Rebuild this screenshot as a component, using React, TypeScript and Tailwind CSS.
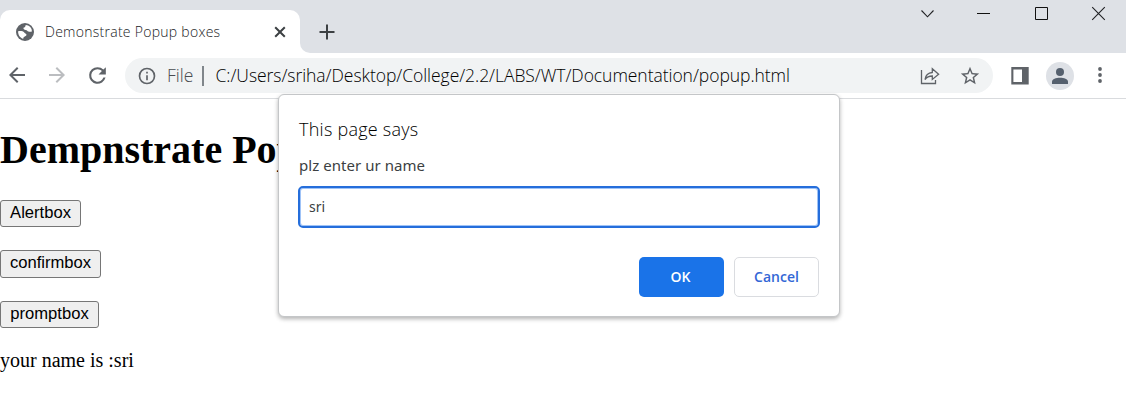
import React from "react";

const ui = "font-['Open_Sans','Noto_Sans',sans-serif]";
const uiBody = "font-['Noto_Sans','Open_Sans',sans-serif]";

function PageButton({ label, className }: { label: string; className: string }) {
  return (
    <button
      className={`flex items-center justify-center rounded-[3px] border border-[#767676] bg-[#efefef] font-['Liberation_Sans',Arial,sans-serif] text-[16.6px] leading-none text-black ${className}`}
    >
      <span className="-mt-px">{label}</span>
    </button>
  );
}

function TabStrip() {
  return (
    <div className="flex h-[53px] bg-[#dee1e6]">
      <div className="mt-[10px] flex h-[43px] w-[300px] items-center rounded-t-[10px] bg-white pl-4">
        <svg viewBox="0 0 18 18" className="size-[18px] shrink-0">
          <circle cx="9" cy="9" r="9" fill="#5f6368" />
          <path
            d="M9.6 2C9.8 3.6 8.8 4.4 7.4 4.8C7.4 6.2 8.2 6.9 9.6 7C11.2 7.1 11.4 8.2 12.4 8.6C13.8 9 15 8.8 15.9 8.4C16 5.6 14.6 3.6 12.6 2.7C11.6 2.2 10.6 2 9.6 2ZM2.1 8.2C3.6 8 5.2 8 6.6 8.3C8 8.6 8.2 10 9.4 10.4C10.6 10.8 10.8 12 10 12.8C9 13.6 7.6 13.4 7.2 15.7C4.2 15 2 12.2 2.1 8.2Z"
            fill="#fff"
          />
        </svg>
        <span className={`ml-[11px] w-[200px] shrink-0 whitespace-nowrap text-[14px] font-light tracking-[0.27px] text-[#202124] ${ui}`}>
          Demonstrate Popup boxes
        </span>
        <svg viewBox="0 0 12 12" className="ml-[29px] size-3 shrink-0" fill="none" stroke="#3c4043" strokeWidth="2">
          <path d="M1.2 1.2 10.8 10.8M10.8 1.2 1.2 10.8" />
        </svg>
      </div>
      <div className="h-[53px] w-[10px] bg-white">
        <div className="h-[53px] rounded-bl-[10px] bg-[#dee1e6]" />
      </div>
      <svg viewBox="0 0 16 16" className="ml-[9px] mt-[24px] size-4" fill="none" stroke="#3c4043" strokeWidth="2">
        <path d="M8 .5V15.5M.5 8H15.5" />
      </svg>
      <div className="ml-auto flex gap-[42px] pr-[20px] pt-[6px]">
        <svg viewBox="0 0 15 15" className="size-[15px]" fill="none" stroke="#202124" strokeWidth="1.1">
          <path d="M1.5 4.5 7.5 10.8 13.5 4.5" />
        </svg>
        <svg viewBox="0 0 15 15" className="size-[15px]" fill="none" stroke="#111" strokeWidth="1">
          <path d="M0 7.5H13" />
        </svg>
        <svg viewBox="0 0 15 15" className="size-[15px]" fill="none" stroke="#111" strokeWidth="1">
          <path d="M1.5 1.5H13.5V13.5H1.5Z" />
        </svg>
        <svg viewBox="0 0 15 15" className="size-[15px]" fill="none" stroke="#202124" strokeWidth="1.1">
          <path d="M1.2 1.2 13.8 13.8M13.8 1.2 1.2 13.8" />
        </svg>
      </div>
    </div>
  );
}

function Toolbar() {
  return (
    <div className="flex h-[46px] items-center border-b border-[#d9dbde] bg-white pl-[5px]">
      <svg viewBox="0 0 24 24" className="-mt-px size-6" fill="#5f6368">
        <path d="M20 11H7.83l5.59-5.59L12 4l-8 8 8 8 1.41-1.41L7.83 13H20z" />
      </svg>
      <svg viewBox="0 0 24 24" className="-mt-px ml-4 size-6" fill="#bbbdc0">
        <path d="M4 11H16.17l-5.59-5.59L12 4l8 8-8 8-1.41-1.41L16.17 13H4z" />
      </svg>
      <svg viewBox="0 0 24 24" className="-mt-px ml-4 size-[25px]" fill="#5f6368">
        <path d="M17.65 6.35A7.96 7.96 0 0 0 12 4a8 8 0 1 0 7.73 10h-2.08A6 6 0 1 1 12 6c1.66 0 3.14.69 4.22 1.78L13 11h7V4z" />
      </svg>
      <div className={`ml-[15px] flex h-[35px] w-[868px] items-center rounded-full bg-[#f1f3f4] pl-[12px] text-[17.5px] font-light ${ui}`}>
        <svg viewBox="0 0 24 24" className="size-5 shrink-0" fill="#5f6368">
          <path d="M11 17h2v-6h-2zm1-15a10 10 0 1 0 0 20 10 10 0 0 0 0-20m0 18a8 8 0 1 1 0-16 8 8 0 0 1 0 16M11 9h2V7h-2z" />
        </svg>
        <span className="ml-[10px] w-[35px] shrink-0 text-[#484c50]">File</span>
        <span className="h-[20px] w-[1.5px] shrink-0 bg-[#80868b]" />
        <span className="ml-[12px] w-[650px] shrink-0 whitespace-nowrap tracking-[-0.05px] text-black">
          C:/Users/sriha/Desktop/College/2.2/LABS/WT/Documentation/popup.html
        </span>
        <svg viewBox="0 0 20 20" className="ml-auto mr-[-1px] size-5 shrink-0" fill="none" stroke="#5f6368" strokeWidth="1.3">
          <path d="M1.5 4V17.5H15.5V14" />
          <path d="M5 13.5C5.6 9.3 8 6.8 12.3 6.5V2.8L18.6 8.3 12.3 13.4V10C9 10 6.8 11 5 13.5Z" />
        </svg>
        <svg viewBox="0 0 24 24" className="ml-5 mr-3 size-[22px] shrink-0" fill="#5f6368">
          <path d="m22 9.24-7.19-.62L12 2 9.19 8.63 2 9.24l5.46 4.73L5.82 21 12 17.27 18.18 21l-1.63-7.03zM12 15.4l-3.76 2.27 1-4.28-3.32-2.88 4.38-.38L12 6.1l1.71 4.04 4.38.38-3.32 2.88 1 4.28z" />
        </svg>
      </div>
      <svg viewBox="0 0 18 18" className="ml-[18px] size-[18px] shrink-0">
        <path d="M.3 0H17.7V17.5H.3ZM2.4 2.6V15H11V2.6Z" fill="#5f6368" fillRule="evenodd" />
      </svg>
      <div className="ml-[17px] flex size-7 shrink-0 items-center justify-center rounded-full bg-[#dee1e6]">
        <svg viewBox="0 0 16 16" className="size-4" fill="#55606e">
          <circle cx="8" cy="4" r="4" />
          <path d="M0 16V13.8C0 11 4 9.7 8 9.7S16 11 16 13.8V16Z" />
        </svg>
      </div>
      <svg viewBox="0 0 4 18" className="-mt-px ml-[24px] h-[18px] w-1 shrink-0" fill="#5f6368">
        <circle cx="2" cy="3" r="1.9" />
        <circle cx="2" cy="9" r="1.9" />
        <circle cx="2" cy="15" r="1.9" />
      </svg>
    </div>
  );
}

function PromptDialog() {
  return (
    <div
      className={`absolute left-[278px] top-[94px] flex h-[223px] w-[562px] flex-col rounded-[6px] border border-[#c4c6c8] bg-white px-[20px] shadow-[0_2px_4px_rgba(0,0,0,0.3)] ${ui}`}
    >
      <div className="mt-[21px] h-[26px] whitespace-nowrap text-[18px] font-light leading-[26px] tracking-[0.25px] text-black">
        This page says
      </div>
      <div className={`mt-[12px] h-[22px] whitespace-nowrap text-[15px] leading-[22px] tracking-[0.05px] text-[#3c3f42] ${uiBody}`}>
        plz enter ur name
      </div>
      <div className={`-mx-px mt-[10px] flex h-[42px] items-center rounded-[5px] border-2 border-[#256edb] pb-0.5 pl-[9px] text-[14px] text-[#3c3f42] shadow-[inset_0_0_0_1px_#9fc3f7] ${uiBody}`}>
        sri
      </div>
      <div className="mt-[29px] flex justify-end gap-[10px] text-[14px] font-semibold">
        <button className="h-10 w-[85px] rounded-[5px] bg-[#1a73e8] pb-0.5 pr-0.5 text-white">OK</button>
        <button className="h-10 w-[85px] rounded-[5px] border border-[#dadce0] bg-white pb-0.5 text-[#3367d6]">Cancel</button>
      </div>
    </div>
  );
}

export default function App() {
  return (
    <div className="relative h-[410px] w-[1126px] overflow-hidden bg-white">
      <TabStrip />
      <Toolbar />
      <main className="flex flex-col items-start font-['Liberation_Serif',serif] text-black">
        <h1 className="mt-[28px] h-[46px] whitespace-nowrap text-[40px] font-bold leading-[46px]">Dempnstrate Pop</h1>
        <PageButton label="Alertbox" className="mt-[27px] h-[27px] w-[81px]" />
        <PageButton label="confirmbox" className="mt-[23px] h-[28px] w-[101px]" />
        <PageButton label="promptbox" className="mt-[23px] h-[27px] w-[99px]" />
        <p className="mt-[20px] whitespace-nowrap text-[20px] leading-6">your name is :sri</p>
      </main>
      <PromptDialog />
    </div>
  );
}
